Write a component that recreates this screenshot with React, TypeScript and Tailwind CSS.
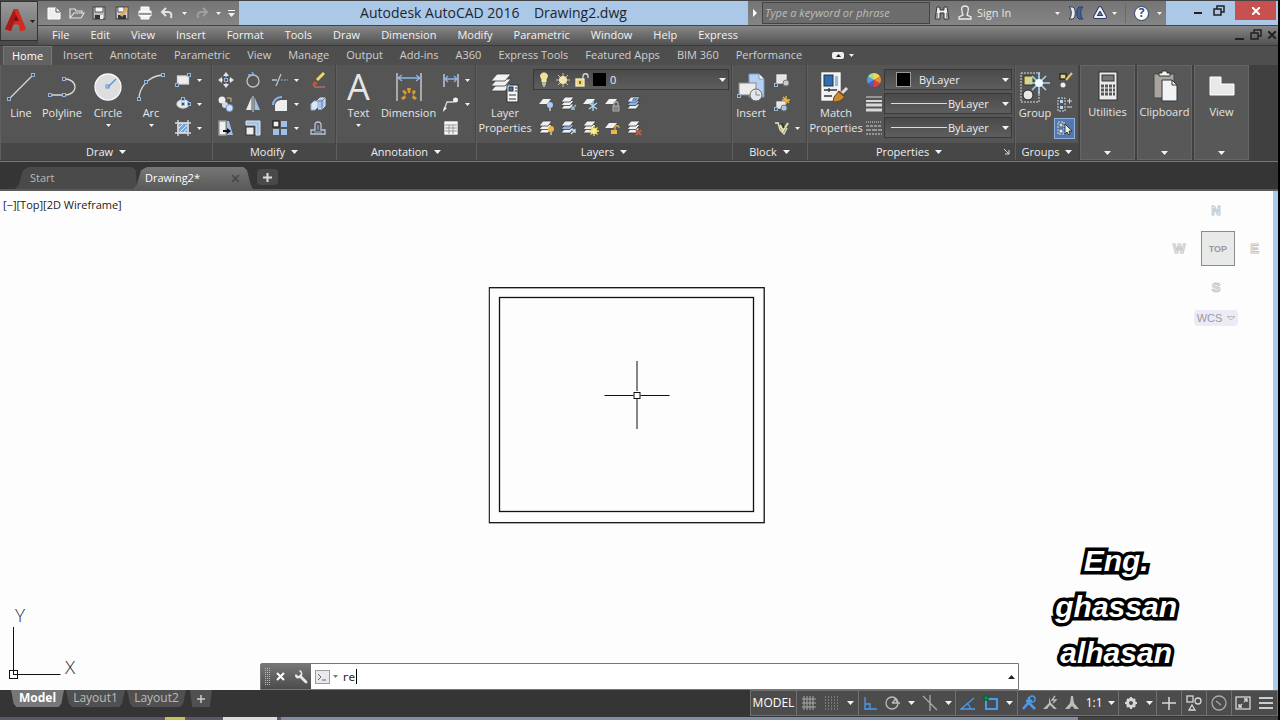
import { ReactNode } from "react";
import clsx from "clsx";

const BLUE = "#8db4e8";

function Svg({ s = 16, children }: { s?: number; children: ReactNode }) {
  return (
    <svg width={s} height={s} viewBox={`0 0 ${s} ${s}`} fill="none" stroke="#d8d8d8" strokeWidth="1.3" className="shrink-0">
      {children}
    </svg>
  );
}

function Arrow({ big, up, dark }: { big?: boolean; up?: boolean; dark?: boolean }) {
  return (
    <svg
      width={big ? 7 : 5}
      height={big ? 4 : 3}
      viewBox="0 0 7 4"
      fill={dark ? "#222" : "#f2f2f2"}
      className={clsx("shrink-0", up && "rotate-180")}
    >
      <path d="M0 0h7L3.5 4z" />
    </svg>
  );
}

function Node({ x, y }: { x: number; y: number }) {
  return <rect x={x - 1.5} y={y - 1.5} width="3" height="3" stroke={BLUE} strokeWidth="1" fill="#505050" />;
}

/* stack of layer sheets, used by most of the layer tools */
function Sheets({ n = 3, blue }: { n?: number; blue?: boolean }) {
  if (n === 1) return <path d="M4 3h8L8 8H0z" fill="#f0f0f0" stroke="none" />;
  return (
    <g fill="#f0f0f0" stroke="#3c3c3c" strokeWidth="0.8">
      <path d="M4 8h9l-4 5H0z" />
      <path d="M4 4.500h9l-4 5H0z" fill={blue ? "#8fb3e8" : "#f0f0f0"} />
      <path d="M4 1h9L9 6H0z" />
    </g>
  );
}

const big = {
  line: (
    <Svg s={32}>
      <path d="M4 28 28 4" />
      <Node x={4} y={28} />
      <Node x={28} y={4} />
    </Svg>
  ),
  polyline: (
    <Svg s={32}>
      <path d="M4 24h15c5 0 10-3 10-8s-5-8-10-8" />
      <Node x={4} y={24} />
      <Node x={18} y={24} />
      <Node x={18} y={8} />
    </Svg>
  ),
  circle: (
    <Svg s={32}>
      <circle cx="16" cy="16" r="13" fill="#dedee1" stroke="#fafafa" />
      <path d="m16 16 8-8" stroke="#5a8fd0" />
      <rect x="14" y="14" width="3" height="3" stroke="#5a8fd0" strokeWidth="1" />
    </Svg>
  ),
  arc: (
    <Svg s={32}>
      <path d="M4 28C4 18 12 5 28 4" />
      <Node x={4} y={28} />
      <Node x={11} y={11} />
      <Node x={28} y={4} />
    </Svg>
  ),
  dimension: (
    <Svg s={32}>
      <path d="M4 2v28M28 2v28" />
      <path d="M5 7h22M9 4 5 7l4 3M23 4l4 3-4 3" stroke={BLUE} />
      <g fill="#d99a30" stroke="none">
        <path d="m8 27 4-3 1 3-3 2zM9 20l3-1 2 3-2 2zM14 17h4l-1 5h-2zM20 19l3 1-2 4-2-2zM24 27l-4-3-1 3 3 2z" />
      </g>
    </Svg>
  ),
  layers: (
    <Svg s={32}>
      <g fill="#f2f2f2" stroke="#3d3d3d" strokeWidth="0.8">
        <path d="M8 13h14l-6 7H2z" />
        <path d="M8 8h14l-6 7H2z" />
        <path d="M8 3h14l-6 7H2z" />
      </g>
      <rect x="18" y="14" width="11" height="17" fill="#f4f4f4" stroke="#333" strokeWidth="1" />
      <rect x="20" y="16" width="4" height="4" fill="#3b6fb0" stroke="#234" strokeWidth="1" />
      <path d="M26 17h2M26 20h2M20 24h7M20 28h7" stroke="#333" strokeWidth="1" />
    </Svg>
  ),
  insert: (
    <Svg s={32}>
      <path d="M14 3h10l5 5v18H14z" fill="#b5d0f0" stroke="#7899c4" strokeWidth="1" />
      <path d="M24 3v5h5" fill="#fff" stroke="#7899c4" strokeWidth="1" />
      <rect x="4" y="12" width="17" height="12" fill="#ececec" stroke="#888" strokeWidth="1" />
      <circle cx="21" cy="24" r="6" fill="#e6e6ea" stroke="#666" strokeWidth="1" />
      <path d="M21 20v4h4" stroke="#888" strokeWidth="1" />
      <Node x={4} y={25} />
    </Svg>
  ),
  match: (
    <Svg s={32}>
      <rect x="2" y="2" width="18" height="27" fill="#f1f1f1" stroke="#fff" />
      <rect x="4" y="4" width="9" height="11" fill="#2f6db0" stroke="#234" strokeWidth="1" />
      <path d="M15 5h3v10h-3z" fill="#9bb8da" stroke="none" />
      <path d="M4 19h13M4 25h8M9 17v4" stroke="#333" />
      <path d="m21 23 6-6" stroke="#ddd" strokeWidth="3" />
      <path d="m14 26 5-6 6 5c-3 5-7 6-12 6z" fill="#c98a35" stroke="#6b4010" strokeWidth="1" />
      <path d="m18 20 7 6" stroke="#7a4a15" />
    </Svg>
  ),
  group: (
    <Svg s={32}>
      <rect x="2" y="2" width="18" height="29" strokeDasharray="2 1" strokeWidth="1" />
      <rect x="5" y="5" width="9" height="9" fill="#ded87c" stroke="#333" strokeWidth="1" />
      <circle cx="9" cy="24" r="5" fill="#e8e8e8" stroke="#222" strokeWidth="1" />
      <path d="M20 1v22M9 12h22M13 5l14 14M27 5 13 19" stroke="#a9d6f5" strokeWidth="1.500" />
      <circle cx="20" cy="12" r="4" fill="#eefaff" stroke="none" />
    </Svg>
  ),
  calc: (
    <Svg s={32}>
      <rect x="7" y="2" width="18" height="28" fill="#ececec" stroke="#333" strokeWidth="1" />
      <rect x="10" y="5" width="12" height="6" fill="#777" stroke="#333" strokeWidth="1" />
      <path d="M9 16h14M9 20h14M9 24h14" stroke="#555" strokeWidth="3" strokeDasharray="3 1" />
    </Svg>
  ),
  clipboard: (
    <Svg s={32}>
      <rect x="5" y="4" width="20" height="24" fill="#a9a49d" stroke="#444" strokeWidth="1" />
      <path d="M10 6V3h3V1h5v2h3v3z" fill="#f4f4f4" stroke="#333" strokeWidth="1" />
      <path d="M13 10h10l5 5v16H13z" fill="#f2f2f2" stroke="#333" strokeWidth="1" />
      <path d="M23 10v5h5" stroke="#333" strokeWidth="1" />
    </Svg>
  ),
  view: (
    <Svg s={32}>
      <path d="M4 7h11v7h13v11H4z" fill="#e9e9e9" stroke="#fff" strokeWidth="1" />
    </Svg>
  ),
};

const draw = [
  <Svg>
    <rect x="2.500" y="4" width="11" height="8" fill="#eee" />
    <Node x={2} y={13} />
    <Node x={14} y={3} />
  </Svg>,
  <Svg>
    <ellipse cx="8" cy="8" rx="6" ry="4" fill="#eee" />
    <Node x={8} y={8} />
    <Node x={14} y={8} />
    <Node x={8} y={3} />
  </Svg>,
  <Svg>
    <rect x="3" y="3" width="10" height="10" fill="#7ba4d8" />
    <path d="M3 0v16M13 0v16M0 3h16M0 13h16" />
    <path d="m4 8 4-4M5 12l7-7M9 12l3-3" stroke="#d9e8fa" strokeWidth="1" />
  </Svg>,
];

const modify = [
  [
    <Svg>
      <path d="M8 2v3M8 11v3M2 8h3M11 8h3" />
      <path d="M8 0l3 4H5zM8 16l3-4H5zM0 8l4-3v6zM16 8l-4-3v6z" fill="#e4e4e4" stroke="none" />
      <Node x={8} y={8} />
    </Svg>,
    <Svg>
      <circle cx="4" cy="4" r="3.500" fill="#eee" stroke="none" />
      <path d="M9 2h4v4" stroke="#e0b66e" strokeWidth="1" />
      <circle cx="7" cy="9" r="3" fill="#d5dce8" stroke="none" />
      <circle cx="11.500" cy="12" r="3.500" fill="#cfe0f5" stroke="#7199cc" strokeWidth="1" />
    </Svg>,
    <Svg>
      <path d="M1 1h7v14H1z" fill="#f0f0f0" stroke="#999" />
      <path d="M9 1h2l4 14H9z" fill="#9cc0ea" stroke="none" />
      <path d="M5 11h6" stroke="#111" strokeWidth="2" />
      <path d="m9 8 4 3-4 3z" fill="#111" stroke="none" />
    </Svg>,
  ],
  [
    <Svg>
      <circle cx="8" cy="9" r="6" stroke="#c4c4c4" />
      <path d="M3 3h6L7 0" stroke={BLUE} />
    </Svg>,
    <Svg>
      <path d="M6.500 1v13H1z" fill="#e8e8e8" stroke="none" />
      <path d="M9.500 1v13H15z" fill="#9cbde6" stroke="none" />
      <path d="M8 0v16" strokeWidth="1" />
    </Svg>,
    <Svg>
      <path d="M1 1h14v14h-4V5H1z" fill="#a4c3ea" stroke="#dce6f4" strokeWidth="1" />
      <rect x="1" y="7" width="8" height="8" fill="#eee" stroke="#333" strokeWidth="1" />
    </Svg>,
  ],
  [
    <Svg>
      <path d="M0 8h5M4 14 9 2" stroke="#b8c4d2" />
      <path d="M9 8h7" stroke={BLUE} strokeDasharray="2 1" strokeWidth="1" />
    </Svg>,
    <Svg>
      <path d="M3 15v-5c0-4 3-6 7-6h5v11z" fill="#eee" stroke="none" />
      <path d="M1 9c0-4 3-8 9-8" stroke={BLUE} strokeWidth="2" />
    </Svg>,
    <Svg>
      <rect x="1" y="1" width="6" height="6" fill="#eee" stroke="#222" />
      <path d="M9 1h6v6H9zM1 9h6v6H1zM9 9h6v6H9z" fill="#9cc0ea" stroke="none" />
    </Svg>,
  ],
  [
    <Svg>
      <path d="M7 8 14 1" stroke="#ecd76a" strokeWidth="3" />
      <path d="m2 14 2-5 4 2-3 3z" fill="#d55028" stroke="none" />
      <path d="M4 15h11" stroke="#c88080" strokeWidth="1" />
    </Svg>,
    <Svg>
      <path d="m1 8 3-3h4v6l-3 3H1z" fill="#dce6f2" stroke="#8fb0dc" strokeWidth="1" />
      <path d="m7 5 3-3h5v8l-3 3H8" fill="#a6c3e8" stroke="#e8eef6" strokeWidth="1" />
      <path d="M7 5h5v8M12 5l3-3" stroke="#5f83b3" strokeWidth="1" />
    </Svg>,
    <Svg>
      <path d="M1 14h14v-4h-4V5c0-2-1-3-3-3S5 3 5 5v5H1z" stroke="#b9c4d4" />
      <path d="M4 12h8M8 5v5" stroke={BLUE} strokeWidth="1" />
    </Svg>,
  ],
];

const annotation = [
  <Svg>
    <path d="M1 2v13M15 2v13" />
    <path d="M2 7h12M5 4 2 7l3 3M11 4l3 3-3 3" stroke={BLUE} />
  </Svg>,
  <Svg>
    <path d="M1 14 4 6h7" />
    <circle cx="12.500" cy="4" r="2.500" fill="#f0f0f0" stroke="none" />
    <path d="m0 16 1-5 3 1z" fill="#eee" stroke="none" />
  </Svg>,
  <Svg>
    <rect x="2" y="2" width="12" height="12" fill="#f0f0f0" stroke="#fff" />
    <path d="M2 5h12M2 8h12M2 11h12M6 5v9M10 5v9" stroke="#999" strokeWidth="1" />
  </Svg>,
];

const layerTools = [
  [
    <Svg>
      <Sheets n={1} />
      <circle cx="11" cy="9" r="3" fill="#a9cdf2" stroke="none" />
      <path d="M11 12v3" stroke="#ddd" />
    </Svg>,
    <Svg>
      <Sheets />
      <path d="m15 9-4 4v-3m0 3h3" stroke="#a8bfd0" />
    </Svg>,
    <Svg>
      <Sheets n={1} />
      <path d="M10 5v10M6 7l8 6M14 7l-8 6" stroke="#a9dcf5" />
    </Svg>,
    <Svg>
      <Sheets n={1} />
      <path d="M9 10V8c0-3 4-3 4 0v2" stroke="#aaa" />
      <rect x="8" y="10" width="6" height="5" fill="#7c8088" stroke="#aaa" strokeWidth="1" />
    </Svg>,
    <Svg>
      <Sheets blue />
      <path d="M6 2h5L9 5H5z" fill="#5f91cf" stroke="none" />
    </Svg>,
  ],
  [
    <Svg>
      <Sheets />
      <circle cx="12" cy="9" r="3" fill="#f4b73e" stroke="none" />
      <path d="M12 12v3" stroke="#ddd" />
    </Svg>,
    <Svg>
      <Sheets blue />
      <path d="m10 14 4-4v3m0-3h-3" stroke="#c8dcf8" />
    </Svg>,
    <Svg>
      <Sheets />
      <path d="M11 6v10M6 11h10M7.500 7.500l7 7M14.500 7.500l-7 7" stroke="#f5de50" />
      <circle cx="11" cy="11" r="3" fill="#fae98c" stroke="none" />
    </Svg>,
    <Svg>
      <Sheets n={1} />
      <path d="M10 10V8c0-3 4-3 4 0" stroke="#e0a63e" />
      <rect x="6" y="10" width="6" height="4" fill="#efb54a" stroke="none" />
    </Svg>,
    <Svg>
      <Sheets />
      <path d="m9 10 5 5M14 10l-5 5" stroke="#c85a35" strokeWidth="2" />
    </Svg>,
  ],
];

const block = [
  <Svg>
    <rect x="3" y="3" width="9" height="8" fill="#e4e4e4" stroke="#eee" />
    <circle cx="12" cy="11" r="3" fill="#ccc" stroke="#777" strokeWidth="1" />
    <Node x={2} y={13} />
  </Svg>,
  <Svg>
    <rect x="3" y="6" width="8" height="6" fill="#e4e4e4" stroke="#eee" />
    <circle cx="10" cy="12" r="3" fill="#aac6ea" stroke="#777" strokeWidth="1" />
    <path d="M12 0v8M8 4h8M9 1l6 6" stroke="#f0b840" />
    <Node x={2} y={13} />
  </Svg>,
  <Svg>
    <path d="M1 3h4M4 3l2 7 4 4 3-6" stroke="#e4e4d0" />
    <path d="m6 5 3 6 5-8" stroke="#eee2a0" strokeWidth="2" />
    <path d="m8 3 2 5" stroke="#222" strokeWidth="1" />
  </Svg>,
];

const props = [
  <Svg>
    <g stroke="none">
      <path d="M8 8V1a7 7 0 0 1 6 3.500z" fill="#f4d94a" />
      <path d="m8 8 6-3.500a7 7 0 0 1 0 7z" fill="#ee8a3a" />
      <path d="m8 8 6 3.500A7 7 0 0 1 8 15z" fill="#d84444" />
      <path d="M8 8v7a7 7 0 0 1-6-3.500z" fill="#6250c0" />
      <path d="m8 8-6 3.500a7 7 0 0 1 0-7z" fill="#4c9fe0" />
      <path d="M8 8 2 4.500A7 7 0 0 1 8 1z" fill="#a7dca0" />
    </g>
  </Svg>,
  <Svg>
    <path d="M0 1h16" strokeWidth="1" />
    <path d="M0 5h16" strokeWidth="2" />
    <path d="M0 9h16M0 14h16" strokeWidth="3" />
  </Svg>,
  <Svg>
    <path d="M0 2h16" strokeDasharray="1 1" strokeWidth="1" />
    <path d="M0 6h16" strokeDasharray="3 1" strokeWidth="1" />
    <path d="M0 10h16" strokeDasharray="5 1" strokeWidth="1" />
    <path d="M0 14h16" strokeDasharray="2 1" strokeWidth="1" />
  </Svg>,
];

const groups = [
  <Svg>
    <rect x="3" y="2" width="6" height="5" fill="#e2d878" stroke="#222" />
    <circle cx="6" cy="13" r="2.500" fill="#eee" stroke="none" />
    <path d="m9 8 6-7" stroke="#dcc870" strokeWidth="2" />
  </Svg>,
  <Svg>
    <rect x="1" y="2" width="7" height="13" strokeDasharray="2 1" strokeWidth="1" />
    <rect x="3" y="4" width="3" height="3" fill="#bcd4f4" stroke="none" />
    <rect x="3" y="10" width="3" height="3" fill="#bcd4f4" stroke="none" />
    <path d="M10 5h5M12.500 2.500v5M10 11h5" strokeWidth="1" />
  </Svg>,
  <Svg>
    <rect x="1" y="2" width="6" height="12" strokeDasharray="2 1" strokeWidth="1" />
    <circle cx="4" cy="5" r="1.500" fill="#cfe0a0" stroke="none" />
    <circle cx="4" cy="11" r="1.500" fill="#eee" stroke="none" />
    <path d="M8 4v10l2-2 2 3 1-1-1-3h3z" fill="#e9f3d0" stroke="#222" strokeWidth="0.8" />
  </Svg>,
];

function Big({ icon, label, w, arrow }: { icon: ReactNode; label: string; w: string; arrow?: boolean }) {
  return (
    <button className={clsx("flex shrink-0 flex-col items-center", w)}>
      <span className="flex h-[37px] items-center justify-center">{icon}</span>
      <span className="text-center leading-[15px] whitespace-pre">{label}</span>
      {arrow && <span className="mt-1"><Arrow /></span>}
    </button>
  );
}

function Column({ icons, w, arrows, active }: { icons: ReactNode[]; w: string; arrows?: boolean[]; active?: number }) {
  return (
    <div className="flex shrink-0 flex-col">
      {icons.map((icon, i) => (
        <div key={i} className="flex h-6 items-center">
          <button className={clsx("flex h-[21px] items-center justify-center", w, active === i && "border border-[#8fb1e0] bg-[#5577ad]")}>
            {icon}
          </button>
          {arrows && <button aria-label="More" className="flex h-4 w-[8px] items-center">{arrows[i] && <Arrow />}</button>}
        </div>
      ))}
    </div>
  );
}

function Panel({ title, w, launcher, children }: { title: string; w: string; launcher?: boolean; children: ReactNode }) {
  return (
    <section className={clsx("flex shrink-0 flex-col border-r border-l border-r-[#454545] border-l-[#606060]", w)}>
      <div className="flex h-[78px] pt-[3px]">{children}</div>
      <button className="flex h-[17px] items-center justify-center gap-[6px] bg-[#474747] text-[#eee]">
        {launcher && <span className="flex-1" />}
        {title}
        <Arrow big />
        {launcher && (
          <span className="flex flex-1 justify-end pr-1">
            <svg width="6" height="6" viewBox="0 0 6 6" stroke="#ddd" fill="none">
              <path d="m0 0 5 5M5 1v4H1" />
            </svg>
          </span>
        )}
      </button>
    </section>
  );
}

function Combo({ id, label, value, children }: { id: string; label: string; value: string; children: ReactNode }) {
  return (
    <div className="flex h-[21px] items-center border border-[#383838] bg-linear-to-b from-[#4a4a4a] to-[#5e5e5e] pr-[2px]">
      {children}
      <select id={id} aria-label={label} className="h-[19px] min-w-0 flex-1 appearance-none bg-transparent leading-[19px] text-[#eee] outline-none">
        <option>{value}</option>
      </select>
      <Arrow big />
    </div>
  );
}

function Collapsed({ icon, label }: { icon: ReactNode; label: string }) {
  return (
    <button className="mr-[2px] flex h-[95px] w-[55px] shrink-0 flex-col items-center border border-[#666] bg-[#585858] pt-[2px]">
      <span className="flex h-9 items-center">{icon}</span>
      <span className="leading-[15px]">{label}</span>
      <span className="mt-auto mb-1"><Arrow big /></span>
    </button>
  );
}

function QuickAccess() {
  return (
    <div className="flex w-[201px] shrink-0 items-center justify-between pr-1 pl-2">
      <button aria-label="New">
        <Svg><path d="M2 3h8l4 4v7H2z" fill="#eee" stroke="#fff" strokeWidth="1" /><path d="M10 3v4h4" stroke="#555" strokeWidth="1" /></Svg>
      </button>
      <button aria-label="Open">
        <Svg><path d="M1 13V4h5l1 2h6v2M1 13l4-5h10l-3 5z" stroke="#e0e0e0" strokeWidth="1.200" /></Svg>
      </button>
      <button aria-label="Save">
        <Svg><path d="M2 2h12v12H2z" fill="#bbb" stroke="#555" /><path d="M4 2h8v5H4z" fill="#f8f8f8" stroke="#555" strokeWidth="1" /><path d="M4 10h8v4H4z" fill="#333" stroke="none" /><path d="M9 10h3v4H9z" fill="#eee" stroke="none" /></Svg>
      </button>
      <button aria-label="Save as">
        <Svg><path d="M2 2h12v12H2z" fill="#ccc" stroke="#555" /><path d="M4 2h6v5H4z" fill="#f8f8f8" stroke="#555" strokeWidth="1" /><path d="M4 10h8v4H4z" fill="#333" stroke="none" /><path d="m7 11 6-8" stroke="#dda65c" strokeWidth="3" /></Svg>
      </button>
      <button aria-label="Plot">
        <Svg><path d="M4 6V2h8v4M2 6h12v5H2zM4 10h8v4H4z" fill="#eee" stroke="#fff" strokeWidth="1" /><path d="M2 9h12" stroke="#666" /></Svg>
      </button>
      <button aria-label="Undo">
        <Svg><path d="M7 3 3 7l4 4M3 7h6c3 0 4 2 3 6" stroke="#e4e4e4" strokeWidth="2" /></Svg>
      </button>
      <Arrow />
      <button aria-label="Redo">
        <Svg><path d="m9 3 4 4-4 4M13 7H7c-3 0-4 2-3 6" stroke="#a0a0a0" strokeWidth="2" /></Svg>
      </button>
      <Arrow />
      <button aria-label="Customize" className="flex flex-col items-center gap-[2px]">
        <span className="h-px w-[7px] bg-white" />
        <Arrow big />
      </button>
    </div>
  );
}

function RestoreIcon() {
  return (
    <svg width="12" height="12" viewBox="0 0 12 12" fill="none" stroke="#222" strokeWidth="1.500">
      <path d="M1 4h7v6H1zM4 4V1h7v6H8" />
    </svg>
  );
}

function TitleBar() {
  return (
    <div className="flex h-6 bg-linear-to-b from-[#757575] to-[#858585]">
      <QuickAccess />
      <div className="flex flex-1 items-center justify-center bg-[#abc8e7] text-[14px] whitespace-pre text-[#1d2530]">
        {"Autodesk AutoCAD 2016    Drawing2.dwg"}
      </div>
      <button aria-label="Collapse search" className="flex w-[14px] items-center justify-center">
        <svg width="4" height="8" viewBox="0 0 4 8" fill="#fff"><path d="M0 0v8l4-4z" /></svg>
      </button>
      <input
        aria-label="Search"
        placeholder="Type a keyword or phrase"
        className="my-px w-[168px] border border-[#444] bg-[#6c6c6c] px-[2px] italic placeholder:text-[#bdbdbd]"
      />
      <div className="flex w-[236px] items-center pl-1 text-[#e8e8e8]">
        <button aria-label="Find">
          <Svg>
            <path d="M3 2h3v3h4V2h3l2 12h-5V8H6v6H1z" fill="#eee" stroke="#333" strokeWidth="1" />
            <path d="M3 8v5M13 8v5" stroke="#444" strokeWidth="1" />
          </Svg>
        </button>
        <button className="ml-[7px] flex items-center gap-1">
          <Svg>
            <path d="M8 1c-3 0-4 2-3 5 0 2 1 3 1 4l-4 2v2h12v-2l-4-2c0-1 1-2 1-4 1-3 0-5-3-5z" fill="#777" stroke="#eee" />
          </Svg>
          Sign In
        </button>
        <span className="ml-auto flex items-center gap-2 pr-1">
          <Arrow />
          <Svg>
            <path d="M1 2h4c3 2 3 10 0 12H1c3-2 3-10 0-12z" fill="#eee" stroke="#2b3f66" strokeWidth="1" />
            <path d="M15 2h-4c-3 2-3 10 0 12h4c-3-2-3-10 0-12z" fill="#41619c" stroke="#2b3f66" strokeWidth="1" />
          </Svg>
          <span className="flex items-center gap-1">
            <Svg>
              <path d="M8 3 3 12h10z" stroke="#2b3f66" strokeWidth="4" strokeLinejoin="round" />
              <path d="M8 3 3 12h10z" stroke="#eef" strokeWidth="2" strokeLinejoin="round" />
            </Svg>
            <Arrow />
          </span>
          <span className="h-5 w-px bg-[#6a6a6a]" />
          <span className="flex items-center gap-2">
            <button aria-label="Help" className="flex h-[15px] w-[15px] items-center justify-center rounded-full border border-[#2b3f66] bg-white text-[12px] font-bold text-[#2b4f9a]">?</button>
            <Arrow />
          </span>
        </span>
      </div>
      <div className="flex w-[112px] bg-[#abc8e7]">
        <button aria-label="Minimize" className="flex w-9 items-center justify-end"><span className="h-[2px] w-2 bg-[#222]" /></button>
        <button aria-label="Restore" className="flex h-5 flex-1 items-center justify-center"><RestoreIcon /></button>
        <button aria-label="Close" className="mr-[2px] flex h-[19px] w-[41px] items-center justify-center bg-[#c75050]">
          <svg width="8" height="8" viewBox="0 0 8 8" stroke="#fff" strokeWidth="2"><path d="m0 0 8 8M8 0 0 8" /></svg>
        </button>
      </div>
    </div>
  );
}

const menus = ["File", "Edit", "View", "Insert", "Format", "Tools", "Draw", "Dimension", "Modify", "Parametric", "Window", "Help", "Express"];

function MenuBar() {
  return (
    <nav className="flex h-5 items-center gap-[21px] border-t border-[#444] bg-linear-to-b from-[#878787] to-[#525252] pb-[2px] pl-[14px] text-[#f2f2f2]">
      {menus.map((m) => (
        <button key={m}>{m}</button>
      ))}
      <span className="ml-auto flex items-center gap-[6px] pr-[2px]">
        <span className="mt-2 h-[2px] w-[9px] bg-[#222]" />
        <RestoreIcon />
        <svg width="8" height="8" viewBox="0 0 8 8" stroke="#222" strokeWidth="2"><path d="m0 0 8 8M8 0 0 8" /></svg>
      </span>
    </nav>
  );
}

const tabs = ["Home", "Insert", "Annotate", "Parametric", "View", "Manage", "Output", "Add-ins", "A360", "Express Tools", "Featured Apps", "BIM 360", "Performance"];

function RibbonTabs() {
  return (
    <nav className="flex h-[20px] items-stretch border-t border-[#3a3a3a] bg-[#4e4e4e] pl-[3px] text-[#cfcfcf]">
      {tabs.map((t, i) => (
        <button key={t} className={clsx("pb-px", i === 0 ? "mr-[2px] border border-b-0 border-[#777] bg-[#626262] px-2 text-white" : "pr-2 pl-[9px]")}>
          {t}
        </button>
      ))}
      <button aria-label="Minimize ribbon" className="ml-[22px] flex items-center gap-[5px]">
        <span className="flex h-[7px] w-3 items-center justify-center rounded-xs bg-[#eee]"><Arrow up dark /></span>
        <Arrow />
      </button>
    </nav>
  );
}

function Ribbon() {
  return (
    <div className="flex h-[97px] border-b border-[#777] bg-[#404040] text-[#e6e6e6]">
      <div className="flex h-[95px] bg-[#555]">
        <Panel title="Draw" w="w-[212px]">
          <Big icon={big.line} label="Line" w="w-[40px]" />
          <Big icon={big.polyline} label="Polyline" w="w-[42px]" />
          <Big icon={big.circle} label="Circle" w="w-[50px]" arrow />
          <Big icon={big.arc} label="Arc" w="w-[36px]" arrow />
          <Column icons={draw} w="w-[28px]" arrows={[true, true, true]} />
        </Panel>
        <Panel title="Modify" w="w-[124px]">
          <Column icons={modify[0]} w="w-[26px]" />
          <Column icons={modify[1]} w="w-[27px]" />
          <Column icons={modify[2]} w="w-[28px]" arrows={[true, true, true]} />
          <Column icons={modify[3]} w="w-[32px]" />
        </Panel>
        <Panel title="Annotation" w="w-[140px]">
          <Big icon={<span className="text-[36px] leading-8">A</span>} label="Text" w="w-[43px]" arrow />
          <Big icon={big.dimension} label="Dimension" w="w-[57px]" />
          <Column icons={annotation} w="w-[28px]" arrows={[true, true, false]} />
        </Panel>
        <Panel title="Layers" w="w-[256px]">
          <Big icon={big.layers} label={"Layer\nProperties"} w="w-[56px]" />
          <div className="min-w-0 flex-1 pt-px pr-[2px]">
            <Combo id="layer" label="Layer" value="0">
              <span className="flex items-center gap-[3px] pr-1 pl-[2px]">
                <Svg>
                  <path d="M8 1c-4 0-4 4-2 6v3h4V7c2-2 2-6-2-6z" fill="#f6df8c" stroke="#fff4c4" strokeWidth="1" />
                  <path d="M6 12h4M7 14h2" />
                </Svg>
                <Svg>
                  <path d="M8 1v14M1 8h14M3 3l10 10M13 3 3 13" stroke="#c9c4a0" strokeWidth="1" />
                  <circle cx="8" cy="8" r="4" fill="#efe6b0" stroke="none" />
                </Svg>
                <Svg>
                  <path d="M9 7V4c0-3 5-3 5 0v2" />
                  <rect x="2" y="7" width="8" height="7" fill="#f0d27a" stroke="#f8eec0" />
                  <path d="M6 9v3" stroke="#333" />
                </Svg>
                <span className="h-[13px] w-[13px] bg-black" />
              </span>
            </Combo>
            <div className="mt-[2px] pl-[3px]">
              {layerTools.map((row, r) => (
                <div key={r} className="flex h-6 items-center">
                  {row.map((icon, i) => (
                    <button key={i} className="flex w-[22px] justify-center">{icon}</button>
                  ))}
                </div>
              ))}
            </div>
          </div>
        </Panel>
        <Panel title="Block" w="w-[75px]">
          <Big icon={big.insert} label="Insert" w="w-[36px]" />
          <Column icons={block} w="w-[26px]" arrows={[false, false, true]} />
        </Panel>
        <Panel title="Properties" w="w-[208px]" launcher>
          <Big icon={big.match} label={"Match\nProperties"} w="w-[56px]" />
          <Column icons={props} w="w-[20px]" />
          <div className="flex flex-1 flex-col gap-[3px] pt-px pr-[2px]">
            <Combo id="color" label="Object color" value="ByLayer">
              <span className="mr-2 ml-[11px] h-[15px] w-[15px] border border-[#999] bg-black" />
            </Combo>
            <Combo id="lineweight" label="Lineweight" value="ByLayer">
              <span className="mr-px ml-[6px] h-px w-[56px] bg-[#ddd]" />
            </Combo>
            <Combo id="linetype" label="Linetype" value="ByLayer">
              <span className="mr-px ml-[6px] h-px w-[56px] bg-[#ddd]" />
            </Combo>
          </div>
        </Panel>
        <Panel title="Groups" w="w-[64px]">
          <Big icon={big.group} label="Group" w="w-[38px]" />
          <Column icons={groups} w="w-[21px]" active={2} />
        </Panel>
      </div>
      <div className="flex pl-px">
        <Collapsed icon={big.calc} label="Utilities" />
        <Collapsed icon={big.clipboard} label="Clipboard" />
        <Collapsed icon={big.view} label="View" />
      </div>
    </div>
  );
}

function DocTabs() {
  return (
    <div className="flex h-[29px] items-end border-b-2 border-[#5a5a5a] bg-[#353535] pl-[15px]">
      <button className="h-[22px] w-[122px] bg-[#4a4a4a] pl-[15px] text-left text-[#b8b8b8] [clip-path:polygon(0_100%,4px_80%,8px_15%,14px_0,96%_0,99%_15%,100%_100%)]">
        Start
      </button>
      <div className="-ml-1 flex h-[22px] w-[120px] items-center bg-linear-to-b from-[#777] to-[#5a5a5a] pr-[14px] pl-3 text-white [clip-path:polygon(0_100%,4px_80%,8px_15%,14px_0,92%_0,95%_15%,98%_80%,100%_100%)]">
        <button>Drawing2*</button>
        <button aria-label="Close drawing" className="ml-auto">
          <svg width="7" height="7" viewBox="0 0 7 7" stroke="#444" strokeWidth="1.500"><path d="m0 0 7 7M7 0 0 7" /></svg>
        </button>
      </div>
      <button aria-label="New tab" className="mb-1 ml-1 flex h-4 w-[21px] items-center justify-center rounded-sm bg-[#4a4a4a]">
        <svg width="9" height="9" viewBox="0 0 9 9" stroke="#ddd" strokeWidth="2"><path d="M4.500 0v9M0 4.500h9" /></svg>
      </button>
    </div>
  );
}

const compass = "text-[#fdfdfd] [-webkit-text-stroke:1px_#c4c4c4]";

function ViewCube() {
  return (
    <div className="absolute top-[12px] right-[14px] flex w-[86px] flex-col items-center font-['Liberation_Sans',sans-serif] text-[13px] leading-4 font-bold">
      <span className={compass}>N</span>
      <div className="mt-3 flex w-full items-center justify-between">
        <span className={compass}>W</span>
        <button className="h-[35px] w-[34px] border border-[#8a8a8a] bg-[#e8eaea] text-[9px] text-[#999]">TOP</button>
        <span className={compass}>E</span>
      </div>
      <span className={clsx("mt-[14px]", compass)}>S</span>
      <button className="mt-[14px] flex h-[16px] w-[44px] items-center justify-center gap-[5px] rounded-sm bg-[#ebebf6] text-[11px] font-normal text-[#9a9aa2]">
        WCS
        <svg width="8" height="5" viewBox="0 0 8 5" fill="none" stroke="#bbb"><path d="M0 .5h8L4 4z" /></svg>
      </button>
    </div>
  );
}

function Canvas() {
  return (
    <main className="relative min-h-[499px] flex-1 border-r-[5px] border-[#a9cbea] bg-[#fdfdfd]">
      <div className="flex px-[3px] pt-[6px] text-[11px] leading-4 text-[#222]">
        <button>[−]</button>
        <button>[Top]</button>
        <button>[2D Wireframe]</button>
      </div>
      <svg width="297" height="240" viewBox="0 0 297 240" fill="none" stroke="#111" strokeWidth="1.300" className="absolute top-[96px] left-1/2 -translate-x-1/2">
        <rect x="0.700" y="0.700" width="275" height="235" />
        <rect x="11" y="10.500" width="254" height="214" />
        <g strokeWidth="1">
          <path d="M148.500 74v30M148.500 111v31M116 108.500h29M152 108.500h29" />
          <rect x="145.500" y="105.500" width="6" height="6" />
        </g>
      </svg>
      <ViewCube />
      <div className="absolute right-[96px] bottom-[14px] text-center font-['Liberation_Sans',sans-serif] text-[30px] leading-[46px] font-bold text-white italic [paint-order:stroke] [-webkit-text-stroke:7px_#000]">
        <p>Eng.</p>
        <p>ghassan</p>
        <p>alhasan</p>
      </div>
      <svg width="80" height="80" viewBox="0 0 80 80" fill="none" stroke="#111" className="absolute bottom-[5px] left-1">
        <path d="M9.500 22v48M9.500 69.500h47" />
        <rect x="5.500" y="65.500" width="8" height="8" />
        <g stroke="none" fill="#333" fontFamily="Open Sans" fontWeight="300" fontSize="19">
          <text x="11" y="17">Y</text>
          <text x="61" y="69">X</text>
        </g>
      </svg>
      <div className="absolute right-[254px] bottom-0 left-[260px] flex h-[27px] rounded-tl-xs border border-[#777] bg-white">
        <div className="flex w-[50px] items-center gap-[6px] bg-linear-to-b from-[#777] to-[#4c4c4c] pl-1">
          <svg width="5" height="17" viewBox="0 0 5 17" stroke="#bbb" strokeDasharray="1 1"><path d="M.5 0v17M2.500 0v17M4.500 0v17" /></svg>
          <button aria-label="Close command line">
            <svg width="9" height="9" viewBox="0 0 9 9" stroke="#fff" strokeWidth="2"><path d="m1 1 7 7M8 1 1 8" /></svg>
          </button>
          <button aria-label="Customize command line" className="ml-1">
            <svg width="14" height="14" viewBox="0 0 14 14" fill="#e8e8e8">
              <path d="M5 0 4 1l2 2-1 2-2 1-2-2-1 1c0 3 2 4 5 3l5 5c2 1 3 0 2-2L7 6c1-3 0-5-2-6z" />
            </svg>
          </button>
        </div>
        <div className="flex flex-1 items-center pr-[3px] pl-1">
          <svg width="15" height="14" viewBox="0 0 15 14" fill="none" stroke="#9c9ca4">
            <rect x="0.500" y="0.500" width="14" height="13" fill="#e8e8ee" />
            <path d="m3 4 3 3-3 3M7 10h4" stroke="#666" />
          </svg>
          <span className="ml-[3px] opacity-60"><Arrow dark /></span>
          <input aria-label="Command" defaultValue="re" className="ml-1 w-[14px] pt-[2px] font-['DejaVu_Sans_Mono',monospace] text-[11px] text-[#222] outline-none" />
          <span className="h-[15px] w-px bg-black" />
          <button aria-label="Command history" className="ml-auto"><Arrow big up dark /></button>
        </div>
      </div>
    </main>
  );
}

const ON = "#4a9bf0";

function StatusCell({ children, w }: { children: ReactNode; w: string }) {
  return <div className={clsx("flex h-[26px] items-center justify-around border border-l-0 border-[#707070]", w)}>{children}</div>;
}

function StatusBar() {
  return (
    <footer className="flex h-[27px] items-start bg-[#353535]">
      <nav className="flex pl-[11px] text-[12px] leading-[16px] text-[#bbb]">
        {["Model", "Layout1", "Layout2"].map((t, i) => (
          <button
            key={t}
            className={clsx(
              "mr-[2px] h-[17px] pb-px [clip-path:polygon(0_0,100%_0,95%_80%,90%_100%,10%_100%,5%_80%)]",
              i === 0 ? "w-[53px] bg-[#777] font-bold text-white" : "w-[59px] bg-[#505050]"
            )}
          >
            {t}
          </button>
        ))}
        <button aria-label="New layout" className="ml-[2px] flex h-[17px] w-[22px] items-center justify-center bg-[#505050] [clip-path:polygon(0_0,100%_0,90%_100%,10%_100%)]">
          <svg width="8" height="8" viewBox="0 0 8 8" stroke="#ccc" strokeWidth="1.500"><path d="M4 0v8M0 4h8" /></svg>
        </button>
      </nav>
      <div className="ml-auto flex border-l border-[#707070] bg-[#4c4c4c] text-[12px] text-white">
        <StatusCell w="w-[46px]"><button>MODEL</button></StatusCell>
        <StatusCell w="w-[62px]">
          <Svg><path d="M3 1v14M6 1v14M9 1v14M12 1v14M1 4h14M1 8h14M1 12h14" strokeWidth="1" stroke="#aaa" /></Svg>
          <Svg><path d="M1 2h14M1 5h14M1 8h14M1 11h14M1 14h14" strokeWidth="1" stroke="#aaa" strokeDasharray="1 2" /></Svg>
          <Arrow big />
        </StatusCell>
        <StatusCell w="w-[97px]">
          <Svg><path d="M3 2v12h12M3 9h5v5" stroke={ON} /></Svg>
          <Svg><circle cx="7" cy="8" r="6" stroke="#bbb" /><path d="M7 8h8M7 8l4-4M9 4c2 0 3 2 3 4" stroke="#bbb" /></Svg>
          <Arrow big />
          <Svg><path d="m1 1 14 14M8 0v16" stroke="#aaa" /></Svg>
          <Arrow big />
        </StatusCell>
        <StatusCell w="w-[62px]">
          <Svg><path d="M15 14H1L14 3M7 9c3 1 3 3 3 5" stroke={ON} /></Svg>
          <Svg><rect x="3" y="4" width="11" height="10" stroke={ON} strokeWidth="2" /><rect x="1" y="1" width="4" height="4" fill="#0a3" stroke="#063" /></Svg>
          <Arrow big />
        </StatusCell>
        <StatusCell w="w-[101px]">
          <Svg><path d="M8 2v5L2 14M8 8l6 6M5 6h6" stroke={ON} strokeWidth="2.500" /><circle cx="11" cy="4" r="3" stroke={ON} /></Svg>
          <Svg><path d="M7 2v6l-6 6h4l3-4 4 4h3L9 8z" fill="#bbb" stroke="none" /><path d="m13 1-3 4h4l-3 3" stroke="#bbb" /></Svg>
          <Svg><path d="M7 1h2l1 7 5 6h-4l-3-3-3 3H1l5-6z" fill="#bbb" stroke="none" /></Svg>
          <button>1:1</button>
          <Arrow big />
        </StatusCell>
        <StatusCell w="w-[38px]">
          <Svg><circle cx="8" cy="8" r="3.500" strokeWidth="3" /><path d="M8 2v2M8 12v2M2 8h2M12 8h2M4 4l1 1M11 11l1 1M12 4l-1 1M4 12l1-1" strokeWidth="2" /></Svg>
          <Arrow big />
        </StatusCell>
        <StatusCell w="w-[25px]"><Svg><path d="M8 2v13M1 8h14" strokeWidth="1.500" /></Svg></StatusCell>
        <StatusCell w="w-[25px]">
          <Svg><rect x="1" y="1" width="6" height="6" /><circle cx="12" cy="6" r="3" /><path d="m6 10 3 5H3z" /></Svg>
        </StatusCell>
        <StatusCell w="w-[25px]"><Svg><circle cx="8" cy="8" r="7" stroke="#aaa" /><path d="m5 6 5 4" stroke="#aaa" /></Svg></StatusCell>
        <StatusCell w="w-[46px]">
          <Svg><rect x="1" y="2" width="14" height="12" /><path d="m9 7 3-3M9 4h3v3M7 9l-3 3M4 9v3h3" /></Svg>
          <Svg><path d="M1 3h14M1 8h14M1 13h14" strokeWidth="2" stroke="#ccc" /></Svg>
        </StatusCell>
      </div>
    </footer>
  );
}

export default function App() {
  return (
    <div className="flex min-h-screen flex-col border-r-2 border-black bg-[#353535] font-['Open_Sans',sans-serif] text-[11px] leading-4">
      <header className="flex border-t border-[#444] bg-[#4a4a4a]">
        <button aria-label="Application menu" className="flex h-10 w-[38px] shrink-0 items-center justify-center gap-[2px] border border-[#333] bg-linear-to-b from-[#999] to-[#6c6c6c]">
          <svg width="24" height="28" viewBox="0 0 24 28">
            <path d="M10 2h4l8 20c-2 2-4 2-6 2l-1-6c-2-1-4-1-6 0l-2 6c-2 0-4-1-6-2z" fill="#d42a22" />
            <path d="M10 2 1 22l6 2 3-9 2-7z" fill="#a81a18" />
            <path d="m12 8-2 6h5z" fill="#7e0e0e" />
          </svg>
          <Arrow dark />
        </button>
        <div className="min-w-0 flex-1">
          <TitleBar />
          <MenuBar />
        </div>
      </header>
      <RibbonTabs />
      <Ribbon />
      <DocTabs />
      <Canvas />
      <StatusBar />
      <div className="flex h-[3px] bg-[#5d5666]">
        <span className="ml-[165px] w-[20px] bg-[#c8c050]" />
        <span className="ml-[38px] w-[54px] bg-[#ddd]" />
        <span className="ml-1 flex-1 bg-[#7f8ea3]" />
        <span className="w-[200px] bg-[#444]" />
      </div>
    </div>
  );
}
